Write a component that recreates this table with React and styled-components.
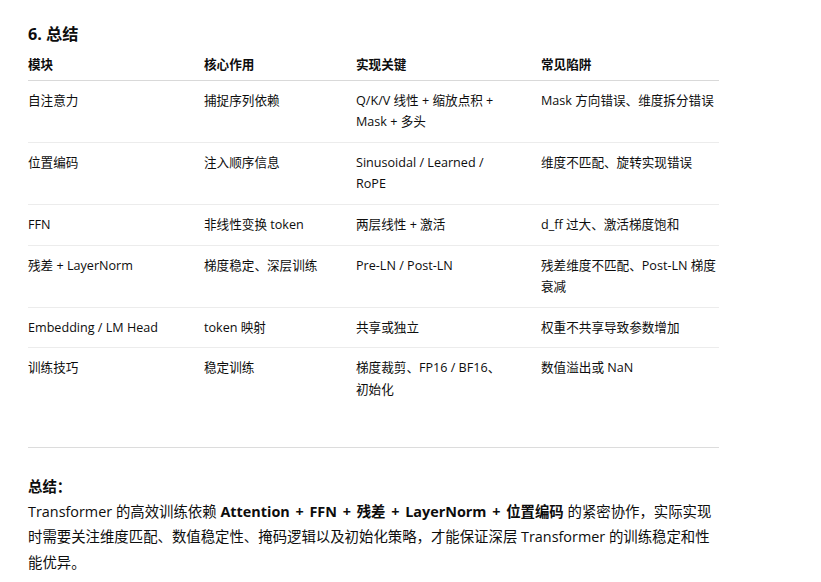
import styled, { createGlobalStyle } from "styled-components";

const GlobalStyle = createGlobalStyle`
    html, body {
        margin: 0;
        padding: 0;
        background: #ffffff;
    }

    body {
        font-family: "Open Sans", "Noto Sans CJK SC", sans-serif;
        color: #0d0d0d;
    }
`

const Page = styled.div`
    width: 691px;
    padding: 23px 0 0 28px;
`

const Title = styled.h3`
    margin: 0 0 9px;
    font-size: 16.2px;
    line-height: 22px;
    font-weight: 700;
`

const Table = styled.table`
    width: 691px;
    border-collapse: collapse;
    table-layout: fixed;
    font-size: 12.6px;
    line-height: 21.6px;

    th {
        font-weight: 700;
        text-align: left;
        border-bottom: 1px solid #d9d9d9;
    }

    tbody tr {
        border-bottom: 1px solid #ececec;
    }

    tbody tr:last-child {
        border-bottom: none;
    }
`

const Cell = styled.td`
    padding: 9px ${p => p.$padRight}px 9px 0;
    vertical-align: top;
`

const HeadCell = styled(Cell)`
    padding-top: 0;
    padding-bottom: 4px;
`

const Divider = styled.hr`
    margin: 37px 0 26px;
    border: none;
    border-top: 1px solid #dcdcdc;
`

const Summary = styled.p`
    margin: 0;
    font-size: 14.4px;
    line-height: 25.4px;

    strong {
        font-weight: 700;
    }

    .key {
        word-spacing: 2px;
    }
`

const columns = [
    { name: "模块", width: 176, pad: 16 },
    { name: "核心作用", width: 152, pad: 16 },
    { name: "实现关键", width: 185, pad: 34 },
    { name: "常见陷阱", width: 178, pad: 0 },
]

const rows = [
    ["自注意力", "捕捉序列依赖", "Q/K/V 线性 + 缩放点积 + Mask + 多头", "Mask 方向错误、维度拆分错误"],
    ["位置编码", "注入顺序信息", "Sinusoidal / Learned / RoPE", "维度不匹配、旋转实现错误"],
    ["FFN", "非线性变换 token", "两层线性 + 激活", "d_ff 过大、激活梯度饱和"],
    ["残差 + LayerNorm", "梯度稳定、深层训练", "Pre-LN / Post-LN", "残差维度不匹配、Post-LN 梯度衰减"],
    ["Embedding / LM Head", "token 映射", "共享或独立", "权重不共享导致参数增加"],
    ["训练技巧", "稳定训练", "梯度裁剪、FP16 / BF16、初始化", "数值溢出或 NaN"],
]

export default function App() {
    return (
        <>
            <GlobalStyle />
            <Page>
                <Title>6. 总结</Title>
                <Table>
                    <colgroup>
                        {columns.map(c => <col key={c.name} style={{ width: c.width }} />)}
                    </colgroup>
                    <thead>
                        <tr>
                            {columns.map(c => (
                                <HeadCell as="th" key={c.name} $padRight={c.pad}>{c.name}</HeadCell>
                            ))}
                        </tr>
                    </thead>
                    <tbody>
                        {rows.map(r => (
                            <tr key={r[0]}>
                                {r.map((text, i) => (
                                    <Cell key={i} $padRight={columns[i].pad}>{text}</Cell>
                                ))}
                            </tr>
                        ))}
                    </tbody>
                </Table>
                <Divider />
                <Summary>
                    <strong>总结：</strong><br />
                    Transformer 的高效训练依赖 <strong className="key">Attention + FFN + 残差 + LayerNorm + 位置编码</strong> 的紧密协作，实际实现时需要关注维度匹配、数值稳定性、掩码逻辑以及初始化策略，才能保证深层 Transformer 的训练稳定和性能优异。
                </Summary>
            </Page>
        </>
    )
}
